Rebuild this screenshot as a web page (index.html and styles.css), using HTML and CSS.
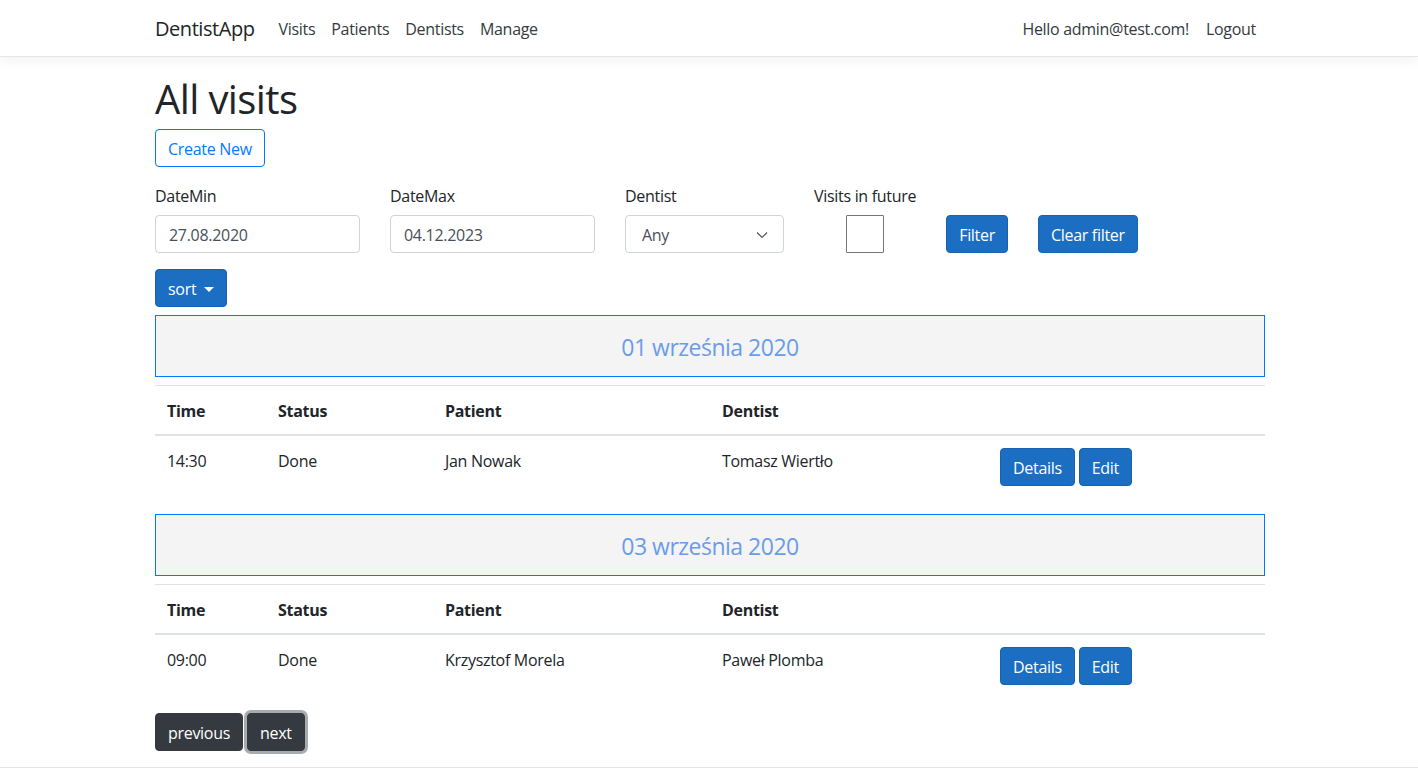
FILE: index.html
```html
<!DOCTYPE html>
<html lang="en">
<head>
<meta charset="utf-8">
<title>All visits - DentistApp</title>
<link rel="stylesheet" href="styles.css">
</head>
<body>
<header class="navbar">
  <div class="container nav-inner">
    <a class="brand" href="#">DentistApp</a>
    <ul class="nav-links">
      <li><a class="nav-link" href="#">Visits</a></li>
      <li><a class="nav-link" href="#">Patients</a></li>
      <li><a class="nav-link" href="#">Dentists</a></li>
      <li><a class="nav-link" href="#">Manage</a></li>
    </ul>
    <ul class="nav-right">
      <li><a class="nav-link" href="#">Hello admin@test.com!</a></li>
      <li><button class="nav-link logout" type="button">Logout</button></li>
    </ul>
  </div>
</header>
<main class="container main">
  <h1 class="title">All visits</h1>
  <div class="create-row"><a class="btn btn-outline" href="#">Create New</a></div>

  <form class="filters">
    <div class="field">
      <label class="label">DateMin</label>
      <input class="input date-input" type="text" value="27.08.2020">
    </div>
    <div class="field">
      <label class="label">DateMax</label>
      <input class="input date-input" type="text" value="04.12.2023">
    </div>
    <div class="field">
      <label class="label">Dentist</label>
      <div class="input select">
        <span>Any</span>
        <svg class="chev" width="12" height="8" viewBox="0 0 12 8"><path d="M1 1.5 L6 6.5 L11 1.5" fill="none" stroke="#555" stroke-width="1.2"/></svg>
      </div>
    </div>
    <div class="field field-center">
      <label class="label">Visits in future</label>
      <input class="checkbox" type="checkbox">
    </div>
    <button class="btn btn-primary" type="button">Filter</button>
    <button class="btn btn-primary" type="button">Clear filter</button>
  </form>

  <div class="sort-row"><button class="btn btn-primary sort" type="button">sort <span class="caret"></span></button></div>

  <section class="day">
    <div class="day-head">01 września 2020</div>
    <table class="table">
      <thead>
        <tr><th class="c1">Time</th><th class="c2">Status</th><th class="c3">Patient</th><th class="c4">Dentist</th><th class="c5"></th></tr>
      </thead>
      <tbody>
        <tr><td>14:30</td><td>Done</td><td>Jan Nowak</td><td>Tomasz Wiertło</td><td class="actions"><a class="btn btn-primary" href="#">Details</a> <a class="btn btn-primary" href="#">Edit</a></td></tr>
      </tbody>
    </table>
  </section>

  <section class="day">
    <div class="day-head">03 września 2020</div>
    <table class="table">
      <thead>
        <tr><th class="c1">Time</th><th class="c2">Status</th><th class="c3">Patient</th><th class="c4">Dentist</th><th class="c5"></th></tr>
      </thead>
      <tbody>
        <tr><td>09:00</td><td>Done</td><td>Krzysztof Morela</td><td>Paweł Plomba</td><td class="actions"><a class="btn btn-primary" href="#">Details</a> <a class="btn btn-primary" href="#">Edit</a></td></tr>
      </tbody>
    </table>
  </section>

  <div class="pager">
    <a class="btn btn-dark" href="#">previous</a>
    <a class="btn btn-dark focused" href="#">next</a>
  </div>
</main>
<footer class="footer"></footer>
</body>
</html>
```

FILE: styles.css
```css
* { box-sizing: border-box; }
html, body { margin: 0; padding: 0; }
body {
  font-family: "Segoe UI", "Open Sans", "Noto Sans", sans-serif;
  font-size: 16px;
  line-height: 1.5;
  letter-spacing: -0.3px;
  color: #212529;
  background: #fff;
  overflow: hidden;
}
a { text-decoration: none; }
ul { list-style: none; margin: 0; padding: 0; }

.container {
  width: 1140px;
  margin: 0 auto;
  padding: 0 14px 0 16px;
}

/* navbar */
.navbar {
  height: 57px;
  border-bottom: 1px solid #e5e5e5;
  box-shadow: 0 .25rem .75rem rgba(0,0,0,.05);
  background: #fff;
}
.nav-inner {
  display: flex;
  align-items: center;
  height: 56px;
}
.brand {
  font-size: 20px;
  line-height: 30px;
  letter-spacing: -0.45px;
  color: #212529;
  margin-right: 16px;
  padding-top: 1px;
}
.nav-links, .nav-right { display: flex; align-items: center; }
.nav-links { flex: 1; }
.nav-link {
  display: block;
  padding: 9px 8px 7px;
  color: #343a40;
  font: inherit;
  letter-spacing: inherit;
  line-height: 24px;
  background: none;
  border: 0;
}
.logout { padding: 9px 9px 7px; }

/* main */
.main { padding-top: 16px; padding-bottom: 16px; }
.title {
  font-size: 40px;
  font-weight: 400;
  line-height: 1.2;
  letter-spacing: -0.6px;
  margin: 0 0 8px;
  padding-top: 2px;
  height: 48px;
}
.create-row { height: 38px; margin-top: 1px; }

.btn {
  display: inline-block;
  font: inherit;
  font-size: 16px;
  letter-spacing: inherit;
  line-height: 24px;
  padding: 7px 12px 5px;
  border: 1px solid transparent;
  border-radius: 4px;
  cursor: pointer;
  vertical-align: top;
}
.btn-outline { color: #007bff; border-color: #007bff; background: #fff; }
.btn-primary { color: #fff; background: #1b6ec2; border-color: #1861ac; }
.btn-dark { color: #fff; background: #343a40; border-color: #343a40; }
.focused { box-shadow: 0 0 0 3px rgba(82,88,93,.5); }

.filters {
  display: flex;
  align-items: flex-end;
  gap: 30px;
  margin-top: 16px;
}
.field { display: flex; flex-direction: column; }
.field-center { align-items: center; }
.label { display: block; line-height: 24px; margin-bottom: 8px; padding-top: 1px; height: 24px; }
.input {
  height: 38px;
  border: 1px solid #ced4da;
  border-radius: 4px;
  padding: 7px 13px 5px;
  font: inherit;
  letter-spacing: inherit;
  color: #495057;
  background: #fff;
}
.date-input { width: 205px; }
.select {
  width: 159px;
  display: flex;
  align-items: center;
  justify-content: space-between;
  padding: 7px 15px 5px 16px;
}
.checkbox {
  -webkit-appearance: none;
  appearance: none;
  width: 38px;
  height: 38px;
  margin: 0;
  border: 1px solid #767676;
  border-radius: 1px;
  background: #fff;
}

.sort-row { margin-top: 16px; height: 38px; }
.caret {
  display: inline-block;
  width: 0; height: 0;
  margin-left: 4px;
  vertical-align: 3px;
  border-top: 5px solid #fff;
  border-left: 5px solid transparent;
  border-right: 5px solid transparent;
}

.day { margin-top: 8px; }
.day + .day { margin-top: 0; }
.day-head {
  height: 62px;
  border: 1px solid #007bff;
  background: #f4f4f4;
  color: #6b9ceb;
  font-size: 23px;
  letter-spacing: -0.5px;
  display: flex;
  align-items: center;
  justify-content: center;
  padding-top: 2px;
  margin-bottom: 8px;
}
.table {
  width: 100%;
  border-collapse: collapse;
  margin-bottom: 16px;
}
.table th, .table td {
  text-align: left;
  vertical-align: top;
  padding: 13px 12px 11px;
  border-top: 1px solid #dee2e6;
  line-height: 24px;
}
.table td.actions { padding: 12px; }
.table th { font-weight: 700; }
.table thead th { border-bottom: 2px solid #dee2e6; }
.c1 { width: 111px; }
.c2 { width: 167px; }
.c3 { width: 277px; }
.c4 { width: 278px; }
.actions { white-space: nowrap; }

.pager { display: flex; gap: 4px; }

.footer {
  border-top: 1px solid #e5e5e5;
  height: 60px;
}
```
